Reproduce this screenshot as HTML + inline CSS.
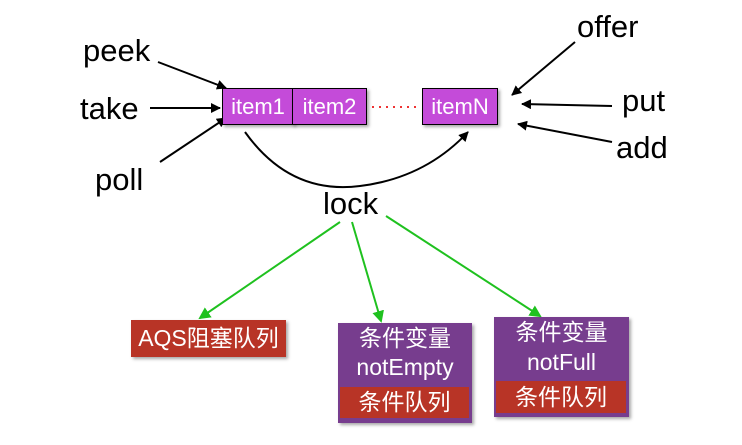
<!DOCTYPE html>
<html><head><meta charset="utf-8"><style>
body{margin:0;width:742px;height:445px;background:#fff;position:relative;overflow:hidden;font-family:"Liberation Sans","Noto Sans CJK SC",sans-serif}
.t{position:absolute;font-size:31px;color:#000;line-height:1}
.it{position:absolute;top:88px;height:37px;background:#c44bd9;border:1.5px solid #000;box-sizing:border-box;color:#fff;font-size:22px;line-height:35px;text-align:center;box-shadow:2px 2px 3px rgba(0,0,0,.35)}
.box{position:absolute;color:#fff;text-align:center;box-shadow:2px 2px 3px rgba(0,0,0,.35)}
.red{background:#b83426}
.pur{background:#773d8e}
</style></head><body>
<svg width="742" height="445" style="position:absolute;left:0;top:0">
<defs>
<marker id="a" markerWidth="10" markerHeight="10" refX="9" refY="5" orient="auto" markerUnits="userSpaceOnUse"><path d="M0,0 L10,5 L0,10 z" fill="#000"/></marker>
<marker id="g" markerWidth="12" markerHeight="12" refX="10" refY="6" orient="auto" markerUnits="userSpaceOnUse"><path d="M0,0 L12,6 L0,12 z" fill="#1fc11f"/></marker>
</defs>
<g stroke="#000" stroke-width="2" fill="none" marker-end="url(#a)">
<line x1="158" y1="62" x2="226" y2="88"/>
<line x1="150" y1="108" x2="220" y2="108"/>
<line x1="160" y1="162" x2="226" y2="118"/>
<line x1="575" y1="42" x2="512" y2="95"/>
<line x1="612" y1="106" x2="522" y2="104"/>
<line x1="612" y1="142" x2="518" y2="124"/>
<path d="M245,132 Q290,195 360,186 Q425,178 468,132"/>
</g>
<line x1="372" y1="107" x2="421" y2="107" stroke="#e33" stroke-width="2" stroke-dasharray="2,5"/>
<g stroke="#1fc11f" stroke-width="2" fill="none" marker-end="url(#g)">
<line x1="340" y1="222" x2="200" y2="318"/>
<line x1="352" y1="222" x2="381" y2="321"/>
<line x1="386" y1="216" x2="540" y2="316"/>
</g>
</svg>
<div class="t" style="left:83px;top:35px">peek</div>
<div class="t" style="left:80px;top:93px">take</div>
<div class="t" style="left:95px;top:164px">poll</div>
<div class="t" style="left:577px;top:11px">offer</div>
<div class="t" style="left:622px;top:85px">put</div>
<div class="t" style="left:616px;top:132px">add</div>
<div class="t" style="left:323px;top:188px">lock</div>
<div class="it" style="left:222px;width:72px">item1</div>
<div class="it" style="left:292px;width:75px">item2</div>
<div class="it" style="left:422px;width:76px">itemN</div>
<div class="box red" style="left:131px;top:320px;width:155px;height:37px;font-size:23px;line-height:37px">AQS阻塞队列</div>
<div class="box pur" style="left:338px;top:323px;width:134px;height:100px;font-size:23px;line-height:29px;padding-top:1px;box-sizing:border-box">条件变量<br>notEmpty
<div class="red" style="position:absolute;left:2px;top:64px;width:129px;height:31px;line-height:31px">条件队列</div></div>
<div class="box pur" style="left:494px;top:317px;width:135px;height:100px;font-size:23px;line-height:30px;padding-top:0;box-sizing:border-box">条件变量<br>notFull
<div class="red" style="position:absolute;left:2px;top:64px;width:130px;height:32px;line-height:32px">条件队列</div></div>
</body></html>
